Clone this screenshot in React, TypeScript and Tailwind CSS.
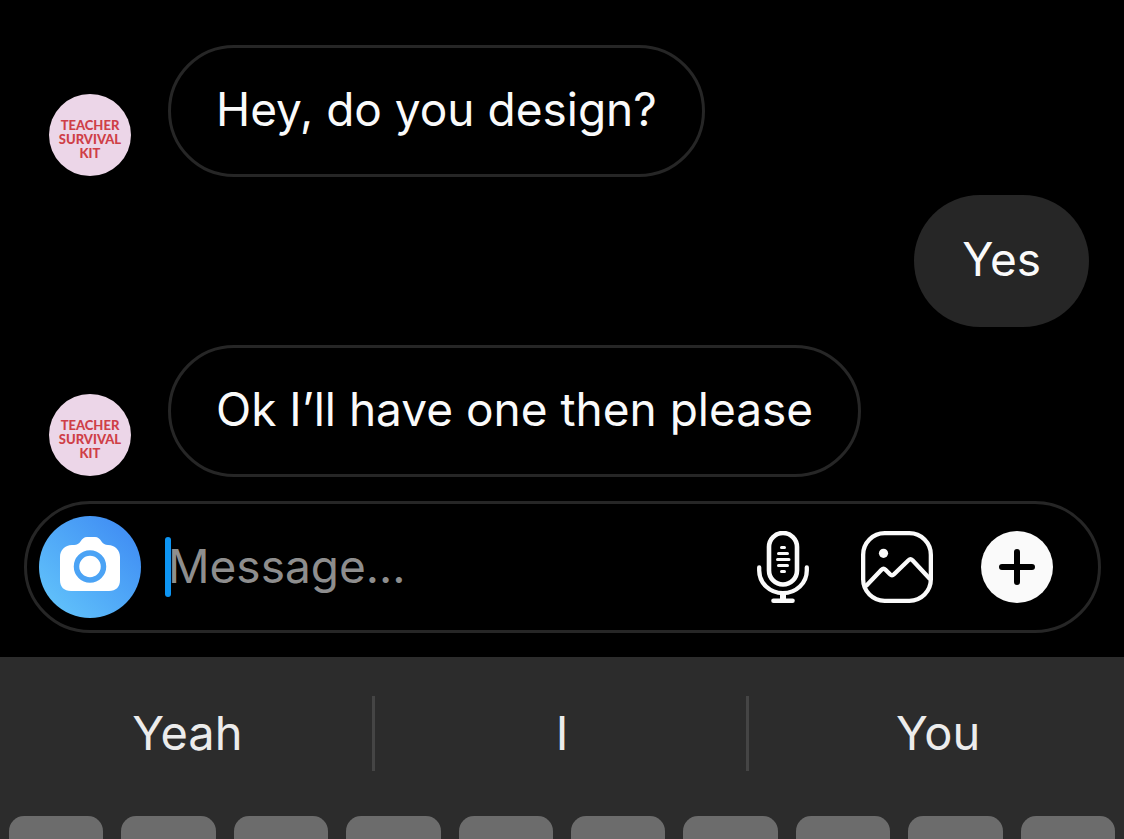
import type { ReactNode } from "react";

function Avatar() {
  return (
    <div className="mb-px flex size-[82px] shrink-0 flex-col items-center justify-center rounded-full bg-[#ecd6e8] pt-2 text-center font-['Lato',sans-serif] text-[13px] leading-[14px] font-black text-[#cf3f47]">
      <span>TEACHER</span>
      <span>SURVIVAL</span>
      <span>KIT</span>
    </div>
  );
}

function Received({ children }: { children: ReactNode }) {
  return (
    <li className="flex items-end gap-[37px] pl-[49px]">
      <Avatar />
      <p className="rounded-full border-[3px] border-[#262626] px-[45px] pt-[31px] pb-[35px] leading-[60px]">{children}</p>
    </li>
  );
}

function CameraIcon() {
  return (
    <svg viewBox="0 0 60 54" className="h-[54px] w-[60px]" aria-hidden="true">
      <path
        fill="#fff"
        d="M12 8h2c3 0 5-1.500 6.500-3.500C22.500 1.500 24 0 27 0h8c3 0 4.500 1.500 6.500 4.500C43 6.500 45 8 48 8h0c7 0 12 5 12 12v23c0 7-4 11-11 11H11C4 54 0 50 0 43V20C0 13 5 8 12 8Z"
      />
      <circle cx="30" cy="29.500" r="13.500" fill="none" stroke="#4ba3f5" strokeWidth="5.500" />
    </svg>
  );
}

function MicIcon() {
  return (
    <svg viewBox="0 0 60 72" className="h-[72px] w-[60px]" fill="none" stroke="#fafafa" strokeLinecap="round" aria-hidden="true">
      <rect x="16" y="2" width="28" height="51.500" rx="14" strokeWidth="4.600" />
      <path strokeWidth="4.300" d="M6.200 36.500v3c0 12.500 10.500 22.700 23.800 22.700s23.800-10.200 23.800-22.700v-3" />
      <path strokeWidth="6" strokeLinecap="butt" d="M30 62v8" />
      <path strokeWidth="4.600" d="M20.500 69.700h19" />
      <path strokeWidth="3" d="M28.500 16.500h3M25.500 22.500h9M24.500 28.500h11.500M25.500 34.500h9M28.500 40.500h3" />
    </svg>
  );
}

function GalleryIcon() {
  return (
    <svg viewBox="0 0 72 72" className="size-[72px]" fill="none" stroke="#fafafa" strokeWidth="4.300" strokeLinecap="round" strokeLinejoin="round" aria-hidden="true">
      <rect x="2.150" y="2.150" width="67.700" height="67.700" rx="21.500" />
      <circle cx="22.500" cy="22.300" r="4.600" fill="#fafafa" stroke="none" />
      <path d="M5.500 54.500 20.500 38.700q2-2 4 0l4.500 4.500q2 2 4 0L47.500 29.200q2-2 4 0L68.500 47.500" />
    </svg>
  );
}

function PlusIcon() {
  return (
    <svg viewBox="0 0 72 72" className="size-[72px]" aria-hidden="true">
      <circle cx="36" cy="36" r="36" fill="#fafafa" />
      <path d="M36 21v30M21 36h30" stroke="#000" strokeWidth="6" strokeLinecap="round" />
    </svg>
  );
}

const suggestions = ["Yeah", "I", "You"];
const topRow = ["Q", "W", "E", "R", "T", "Y", "U", "I", "O", "P"];

export default function App() {
  return (
    <main className="flex min-h-screen flex-col bg-black font-['Inter',sans-serif] text-[46px] text-[#fafafa]">
      <ul className="flex flex-col gap-[18px] pt-[45px]">
        <Received>Hey, do you design?</Received>
        <li className="flex justify-end pr-[35px]">
          <p className="rounded-full bg-[#262626] px-12 pt-[34px] pb-[38px] leading-[60px]">Yes</p>
        </li>
        <Received>Ok I’ll have one then please</Received>
      </ul>

      <form
        className="mt-6 mr-[23px] ml-6 flex items-center rounded-full border-[3px] border-[#262626] py-3 pr-[45px] pl-3"
        onSubmit={(event) => event.preventDefault()}
      >
        <button
          type="button"
          aria-label="Camera"
          className="flex size-[102px] shrink-0 items-center justify-center rounded-full bg-linear-to-tr from-[#66c8fb] to-[#3d86f2] pb-[6px]"
        >
          <CameraIcon />
        </button>
        <div className="relative ml-6 flex min-w-0 flex-1 items-center">
          <input
            type="text"
            aria-label="Message"
            placeholder="Message..."
            className="h-[60px] w-full min-w-0 bg-transparent pb-[2px] pl-[3px] outline-none placeholder:text-[#8e8e8e]"
          />
          <span className="absolute left-0 h-[60px] w-[6px] rounded-sm bg-[#0d95f3]" />
        </div>
        <div className="flex shrink-0 items-center gap-12">
          <button type="button" aria-label="Record voice message">
            <MicIcon />
          </button>
          <button type="button" aria-label="Choose photo">
            <GalleryIcon />
          </button>
          <button type="button" aria-label="More options">
            <PlusIcon />
          </button>
        </div>
      </form>

      <section aria-label="Keyboard" className="mt-6 flex flex-1 flex-col bg-[#2c2c2c] pt-[39px] text-[#ececec]">
        <div className="grid grid-cols-3 divide-x-[3px] divide-[#454545]">
          {suggestions.map((word) => (
            <button key={word} type="button" className="h-[75px] pl-[3px] text-[47px]">
              {word}
            </button>
          ))}
        </div>
        <div className="mt-[45px] grid flex-1 grid-cols-10 gap-[18px] px-[9px]">
          {topRow.map((letter) => (
            <button key={letter} type="button" aria-label={letter} className="h-full min-h-[23px] rounded-t-[15px] bg-[#6c6c6c]" />
          ))}
        </div>
      </section>
    </main>
  );
}
